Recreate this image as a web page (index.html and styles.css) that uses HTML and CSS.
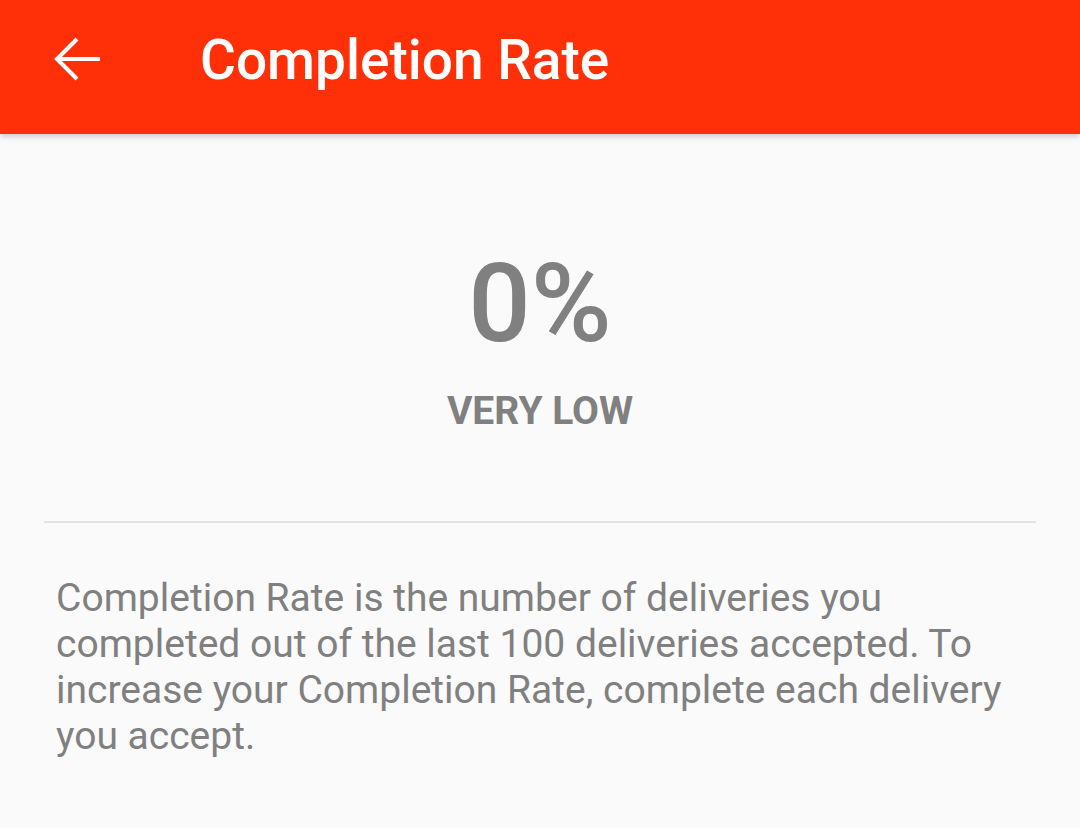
FILE: index.html
```html
<!DOCTYPE html>
<html>
<head>
<meta charset="utf-8">
<link rel="stylesheet" href="styles.css">
</head>
<body>
<header class="appbar">
  <div class="back">
    <svg viewBox="0 0 46 44" width="46" height="44"><path d="M46 22H3M23 2L3 22l20 20" fill="none" stroke="#fff" stroke-width="4"/></svg>
  </div>
  <h1 class="title">Completion Rate</h1>
</header>
<main class="content">
  <section class="score">
    <div class="pct">0%</div>
    <div class="level">VERY LOW</div>
  </section>
  <hr class="divider">
  <p class="desc">Completion Rate is the number of deliveries you completed out of the last 100 deliveries accepted. To increase your Completion Rate, complete each delivery you accept.</p>
</main>
</body>
</html>
```
FILE: styles.css
```css
html, body {
  margin: 0;
  padding: 0;
  background: #fafafa;
  font-family: Roboto, "Noto Sans", sans-serif;
  width: 1080px;
  height: 828px;
  overflow: hidden;
}
.appbar {
  height: 134px;
  background: #ff3008;
  display: flex;
  align-items: center;
  box-shadow: 0 2px 6px rgba(0,0,0,0.22);
  position: relative;
  z-index: 1;
}
.back {
  width: 46px;
  height: 44px;
  margin-left: 54px;
  margin-top: -17px;
  display: flex;
}
.title {
  margin: -14px 0 0 100px;
  font-size: 55px;
  font-weight: 500;
  color: #fff;
}
.content {
  display: flex;
  flex-direction: column;
}
.score {
  display: flex;
  flex-direction: column;
  align-items: center;
  padding-top: 100px;
}
.pct {
  font-size: 110px;
  font-weight: 500;
  line-height: 140px;
  color: #808080;
}
.level {
  margin-top: 14px;
  font-size: 39px;
  font-weight: 700;
  color: #808080;
  line-height: 46px;
}
.divider {
  margin: 87px 44px 0 44px;
  border: none;
  height: 2px;
  background: #e2e2e2;
}
.desc {
  margin: 52px 56px 0 56px;
  font-size: 39px;
  line-height: 46px;
  color: #808080;
}
```
